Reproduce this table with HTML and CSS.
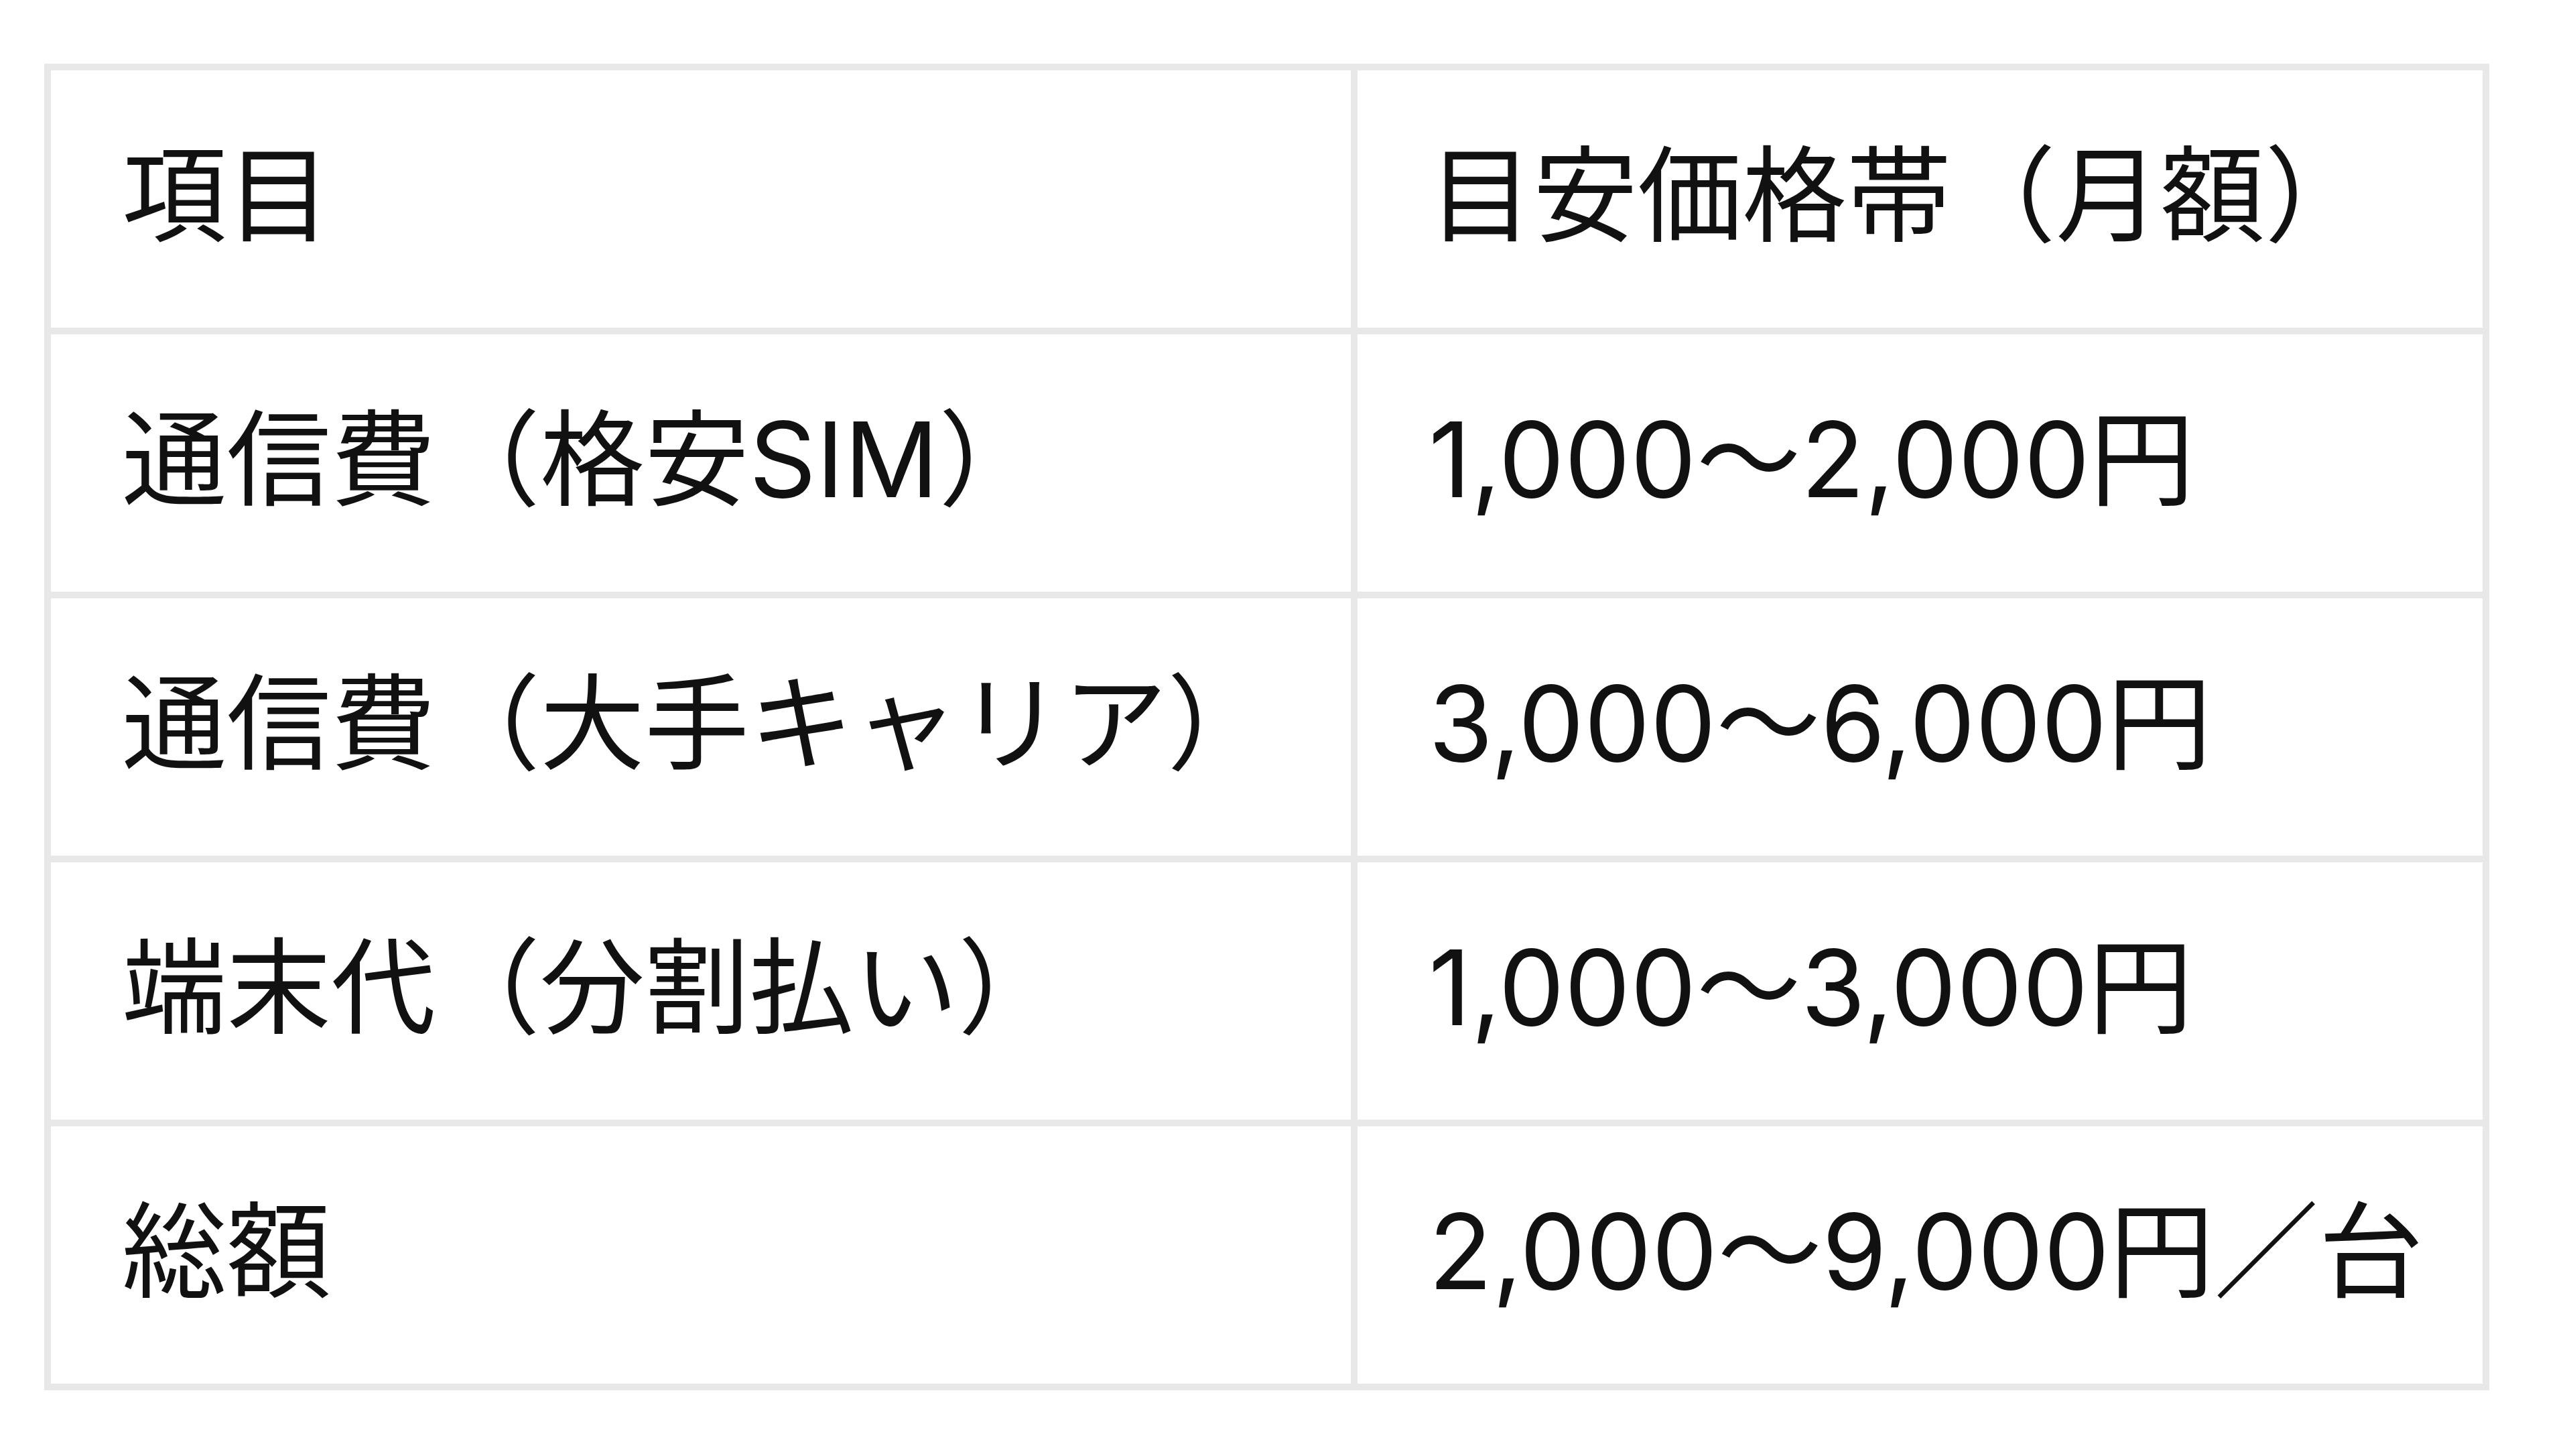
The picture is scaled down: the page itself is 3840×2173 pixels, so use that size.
FILE: index.html
```html
<!DOCTYPE html>
<html lang="ja">
<head>
<meta charset="utf-8">
<title>目安価格帯</title>
<link rel="stylesheet" href="styles.css">
</head>
<body>
<div class="price-table">
  <div class="cell">項目</div>
  <div class="cell">目安価格帯（月額）</div>
  <div class="cell">通信費（格安SIM）</div>
  <div class="cell">1,000〜2,000円</div>
  <div class="cell">通信費（大手キャリア）</div>
  <div class="cell">3,000〜6,000円</div>
  <div class="cell">端末代（分割払い）</div>
  <div class="cell">1,000〜3,000円</div>
  <div class="cell">総額</div>
  <div class="cell">2,000〜9,000円／台</div>
</div>
</body>
</html>
```

FILE: styles.css
```css
html, body {
  margin: 0;
  padding: 0;
  background: #ffffff;
}

body {
  font-family: "Inter", "Noto Sans CJK JP", "Noto Sans", sans-serif;
  color: #111111;
}

.price-table {
  display: grid;
  grid-template-columns: 1950px 1689px;
  margin: 95px 0 0 66px;
  width: max-content;
  border-top: 10px solid #e8e8e8;
  border-left: 10px solid #e8e8e8;
}

.cell {
  border-right: 10px solid #e8e8e8;
  border-bottom: 10px solid #e8e8e8;
  padding: 70px 0 80px 106px;
  font-size: 156px;
  line-height: 234px;
  white-space: nowrap;
}
```
